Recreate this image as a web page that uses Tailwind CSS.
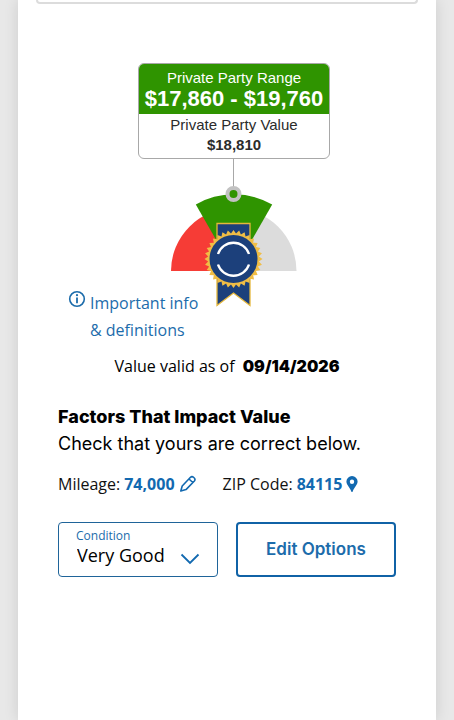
<!DOCTYPE html>
<html lang="en">
  <head>
    <meta charset="UTF-8" />
    <meta name="viewport" content="width=device-width, initial-scale=1.0" />
    <title>Private Party Value</title>
    <script src="https://cdn.jsdelivr.net/npm/@tailwindcss/browser@4"></script>
  </head>
  <body class="bg-[#e8e8e8] font-['Open_Sans',sans-serif] text-base text-[#111]">
    <main class="mx-[18px] min-h-screen bg-white shadow-[0_0_14px_rgba(0,0,0,0.12)]">
      <div class="mx-[18px] h-1 rounded-b border-2 border-t-0 border-[#dcdcdc]"></div>

      <div class="px-10 pt-[59px] pb-10">
        <!-- Price gauge -->
        <section class="flex flex-col items-center pl-3.5">
          <div
            class="w-48 overflow-hidden rounded-md border border-[#a8a8a8] text-center font-['Liberation_Sans',sans-serif] text-[15px] text-[#2b2b2b]"
          >
            <div class="bg-[#2f9400] pt-1 pb-1 text-white">
              <p class="leading-5">Private Party Range</p>
              <p class="text-[22px] leading-[22px] font-bold">$17,860 - $19,760</p>
            </div>
            <p class="leading-[22px]">Private Party Value</p>
            <p class="pb-1 leading-[18px] font-bold">$18,810</p>
          </div>

          <svg class="h-[148px] w-48" viewBox="0 0 192 148" aria-hidden="true">
            <path d="M96 112H33A62.500 62.500 0 0 1 96 49.500Z" fill="#f63c36" />
            <path d="M96 112V49.500A62.500 62.500 0 0 1 158.500 112Z" fill="#dcdcdc" />
            <path d="M96 112L57.800 45.500A77 77 0 0 1 134.200 45.500Z" fill="#2f9400" />
            <path d="M95.500 0V28" stroke="#a8a8a8" />
            <circle cx="95.500" cy="35" r="6" fill="#2f9400" stroke="#c2c2c2" stroke-width="4" />
            <path
              d="M79 64.500H112V146.500L95.500 134L79 146.500Z"
              fill="#1c407b"
              stroke="#e5b73b"
              stroke-width="1.300"
            />
            <polygon id="seal" fill="#f0bd45" />
            <circle cx="95.500" cy="100" r="24" fill="#1c407b" />
            <path
              d="M80 95A16.300 16.300 0 0 1 111 95M80 105.500A16.300 16.300 0 0 0 111 105.500"
              fill="none"
              stroke="#fff"
              stroke-width="2.400"
            />
          </svg>
        </section>

        <a href="#" class="-mt-[17px] ml-2.5 flex w-fit gap-1 leading-[27px] text-[#1c6cab]">
          <svg class="size-[18px]" viewBox="0 0 18 18" fill="none" stroke="currentColor">
            <circle cx="9" cy="9" r="7.300" stroke-width="1.600" />
            <path d="M9 7.500V13.200" stroke-width="1.800" />
            <circle cx="9" cy="5.200" r="1.100" fill="currentColor" stroke="none" />
          </svg>
          <span>Important info<br />&amp; definitions</span>
        </a>

        <p class="mt-2.5 text-center leading-6 text-black">
          Value valid as of
          <b class="ml-1 font-['Inter',sans-serif] font-black">09/14/2026</b>
        </p>

        <!-- Factors -->
        <section class="mt-[25px]">
          <div class="font-['Inter',sans-serif] text-lg leading-[27px] text-black">
            <h2 class="font-extrabold">Factors That Impact Value</h2>
            <p>Check that yours are correct below.</p>
          </div>

          <div class="mt-[15px] flex gap-[26px] leading-6">
            <p class="flex items-center gap-1">
              Mileage:
              <a href="#" class="flex items-center gap-1 font-bold text-[#1269b0]">
                74,000
                <svg
                  class="size-[18px]"
                  viewBox="0 0 18 18"
                  fill="none"
                  stroke="currentColor"
                  stroke-width="1.600"
                  stroke-linejoin="round"
                >
                  <path d="M1.800 16L3.200 11L11.500 2.300Q13 1 14.800 2.500Q16.800 4.300 15.400 6L7 14.600ZM10 4L13.800 7.500" />
                </svg>
              </a>
            </p>
            <p class="flex items-center gap-1">
              ZIP Code:
              <a href="#" class="flex items-center gap-1 font-bold text-[#1269b0]">
                84115
                <svg class="h-4 w-3" viewBox="0 0 12 16" fill="currentColor">
                  <path
                    fill-rule="evenodd"
                    d="M6 0A5.600 5.600 0 0 1 11.600 5.600C11.600 9 8 11.500 6.700 15.500Q6 16.500 5.300 15.500C4 11.500 .4 9 .4 5.600A5.600 5.600 0 0 1 6 0ZM6 3.500A2.200 2.200 0 1 0 6 7.900A2.200 2.200 0 1 0 6 3.500Z"
                  />
                </svg>
              </a>
            </p>
          </div>

          <div class="mt-[26px] grid grid-cols-2 gap-[18px]">
            <div class="relative">
              <label for="condition" class="absolute top-1.5 left-[18px] text-xs leading-4 text-[#1c6cab]"
                >Condition</label
              >
              <select
                id="condition"
                name="condition"
                class="h-[55px] w-full appearance-none rounded border border-[#1f6499] bg-white pt-2.5 pl-[18px] text-lg text-black"
              >
                <option>Very Good</option>
              </select>
              <svg
                class="pointer-events-none absolute right-[18px] bottom-3 h-3 w-5"
                viewBox="0 0 20 12"
                fill="none"
                stroke="#1269b0"
                stroke-width="1.800"
              >
                <path d="M1.500 1.500L10 10L18.500 1.500" />
              </svg>
            </div>
            <button
              type="button"
              class="h-[55px] rounded border-2 border-[#1062a6] font-['Inter',sans-serif] text-[17px] font-semibold text-[#1c6cab]"
            >
              Edit Options
            </button>
          </div>
        </section>
      </div>
    </main>
  </body>

  <script>
    // toothed edge of the award seal
    const points = [];
    const teeth = 32;
    for (let i = 0; i < teeth * 2; i++) {
      const r = i % 2 ? 25.5 : 29;
      const a = (i * Math.PI) / teeth;
      points.push(`${(95.5 + r * Math.cos(a)).toFixed(2)},${(100 + r * Math.sin(a)).toFixed(2)}`);
    }
    document.getElementById("seal").setAttribute("points", points.join(" "));
  </script>
</html>
